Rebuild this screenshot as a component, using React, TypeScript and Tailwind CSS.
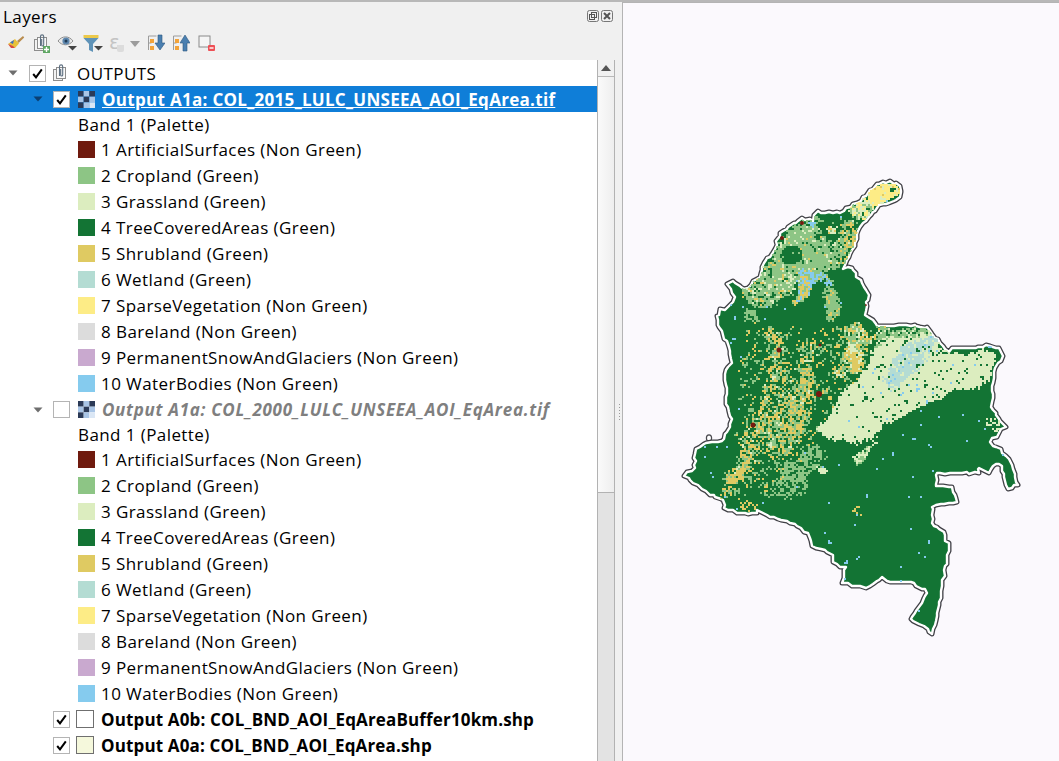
import React, { useMemo } from 'react';

type Pt = [number, number];
type ClassName = 'dark' | 'crop' | 'grass' | 'shrub' | 'wet' | 'sparse' | 'water' | 'red' | 'bare';

const COLORS: Record<ClassName, string> = {
  dark: '#137434',
  crop: '#8dc585',
  grass: '#dcedbf',
  shrub: '#dfca62',
  wet: '#b4dcd3',
  sparse: '#fdec86',
  water: '#85cbee',
  red: '#771a10',
  bare: '#dcdcdc',
};

const legend = [
  { color: '#6f1a0e', label: '1 ArtificialSurfaces (Non Green)' },
  { color: '#8dc585', label: '2 Cropland (Green)' },
  { color: '#dcedbf', label: '3 Grassland (Green)' },
  { color: '#137434', label: '4 TreeCoveredAreas (Green)' },
  { color: '#dfca62', label: '5 Shrubland (Green)' },
  { color: '#b4dcd3', label: '6 Wetland (Green)' },
  { color: '#fdec86', label: '7 SparseVegetation (Non Green)' },
  { color: '#dcdcdc', label: '8 Bareland (Non Green)' },
  { color: '#c9a9cf', label: '9 PermanentSnowAndGlaciers (Non Green)' },
  { color: '#85cbee', label: '10 WaterBodies (Non Green)' },
];

const outlineBase: Pt[] = [
  [870, 190], [876, 185], [883, 182], [891, 182], [897, 184], [902, 193], [897, 200], [880, 206], [876, 210], [870, 218],
  [862, 223], [858, 235], [853, 250], [843, 268], [852, 268], [857, 277], [862, 283], [869, 295], [865, 315], [873, 320],
  [877, 327], [910, 325], [928, 328], [948, 352], [953, 349], [987, 346], [1000, 348], [1002, 357], [995, 367], [992, 383],
  [992, 410], [995, 412], [1005, 427], [990, 442], [1010, 458], [1018, 485], [1008, 488], [1000, 463], [988, 472], [980, 467],
  [978, 473], [937, 473], [936, 487], [952, 488], [957, 502], [932, 506], [932, 523], [943, 532], [949, 548], [933, 633],
  [927, 630], [920, 623], [910, 620], [928, 592], [910, 582], [893, 583], [883, 578], [870, 587], [852, 586], [843, 582],
  [845, 568], [833, 563], [832, 554], [813, 545], [808, 533], [790, 522], [770, 517], [758, 510], [757, 514], [737, 512],
  [725, 508], [723, 500], [703, 490], [685, 475], [695, 468], [695, 450], [707, 443], [722, 442], [733, 420], [727, 408],
  [725, 370], [732, 363], [727, 342], [717, 325], [720, 310], [728, 307], [735, 297], [728, 285], [732, 282], [745, 290],
  [762, 273], [763, 263], [773, 253], [780, 233], [802, 218], [813, 220], [817, 212], [840, 213], [860, 200],
];

const hash = (x: number, y: number) => {
  const s = Math.sin(x * 127.1 + y * 311.7) * 43758.5453;
  return s - Math.floor(s);
};

const smooth = (x: number, y: number) => {
  const ix = Math.floor(x);
  const iy = Math.floor(y);
  const fx = x - ix;
  const fy = y - iy;
  const u = fx * fx * (3 - 2 * fx);
  const v = fy * fy * (3 - 2 * fy);
  const a = hash(ix, iy);
  const b = hash(ix + 1, iy);
  const c = hash(ix, iy + 1);
  const d = hash(ix + 1, iy + 1);
  return a + (b - a) * u + (c - a) * v + (a - b - c + d) * u * v;
};

// the coast and the border are not straight lines
const roughen = (poly: Pt[]): Pt[] => {
  const out: Pt[] = [];
  poly.forEach((a, i) => {
    const b = poly[(i + 1) % poly.length];
    const len = Math.hypot(b[0] - a[0], b[1] - a[1]);
    const steps = Math.max(1, Math.round(len / 4));
    for (let s = 0; s < steps; s++) {
      const t = s / steps;
      const x = a[0] + (b[0] - a[0]) * t;
      const y = a[1] + (b[1] - a[1]) * t;
      out.push([Math.round(x + (hash(x, y) - 0.5) * 2.4), Math.round(y + (hash(y, x) - 0.5) * 2.4)]);
    }
  });
  return out;
};

const outline = roughen(outlineBase);

const disc = (cx: number, cy: number, r: number): Pt[] =>
  Array.from({ length: 10 }, (_, i) => [cx + r * Math.cos((i * Math.PI) / 5), cy + r * Math.sin((i * Math.PI) / 5)] as Pt);

type Region = { poly: Pt[]; mix: Partial<Record<ClassName, number>>; warp?: number };

// later regions win over earlier ones
const regions: Region[] = [
  { poly: [[748, 325], [880, 325], [850, 385], [810, 440], [790, 500], [740, 500], [735, 470]], mix: { dark: 0.8, crop: 0.12, shrub: 0.08 } },
  { poly: [[745, 288], [775, 280], [775, 310], [745, 303]], mix: { crop: 0.55, dark: 0.28, shrub: 0.1, grass: 0.07 }, warp: 4 },
  { poly: [[783, 233], [813, 223], [818, 220], [820, 237], [830, 247], [840, 240], [843, 267], [827, 270], [797, 273], [793, 297], [773, 303], [770, 283], [750, 287], [760, 273], [773, 257], [780, 240]], mix: { crop: 0.82, dark: 0.06, grass: 0.07, shrub: 0.05 } },
  { poly: disc(792, 255, 10), mix: { dark: 0.97, crop: 0.03 }, warp: 2 },
  { poly: [[817, 213], [857, 220], [847, 230], [833, 245], [823, 237], [818, 227]], mix: { dark: 0.96, crop: 0.04 }, warp: 3 },
  { poly: [[828, 226], [838, 228], [834, 236], [826, 232]], mix: { grass: 0.5, shrub: 0.3, crop: 0.2 }, warp: 2 },
  { poly: [[840, 225], [860, 221], [846, 266], [838, 262]], mix: { shrub: 0.3, crop: 0.35, dark: 0.28, grass: 0.07 } },
  { poly: [[770, 283], [797, 277], [794, 300], [772, 306]], mix: { crop: 0.6, grass: 0.2, shrub: 0.12, dark: 0.08 } },
  { poly: [[797, 283], [803, 267], [827, 273], [830, 277], [817, 285], [803, 292]], mix: { water: 0.65, crop: 0.25, shrub: 0.1 }, warp: 4 },
  { poly: [[800, 283], [812, 283], [808, 300], [795, 305]], mix: { shrub: 0.5, crop: 0.3, water: 0.2 }, warp: 4 },
  { poly: [[827, 280], [833, 280], [834, 312], [824, 312]], mix: { water: 0.3, crop: 0.5, dark: 0.2 }, warp: 3 },
  { poly: [[824, 297], [834, 287], [841, 317], [828, 322]], mix: { crop: 0.7, dark: 0.15, shrub: 0.15 }, warp: 4 },
  { poly: [[807, 222], [816, 223], [812, 229]], mix: { water: 1 }, warp: 1 },
  { poly: [[847, 212], [867, 198], [872, 205], [870, 216], [860, 221]], mix: { grass: 0.4, crop: 0.3, sparse: 0.2, dark: 0.1 }, warp: 3 },
  { poly: [[866, 197], [870, 190], [883, 183], [897, 184], [902, 193], [880, 205], [872, 208]], mix: { sparse: 0.82, grass: 0.1, shrub: 0.08 }, warp: 1 },
  { poly: disc(893, 190, 2.5), mix: { dark: 0.9, sparse: 0.1 }, warp: 0 },
  { poly: [[743, 310], [757, 310], [757, 322], [745, 322]], mix: { crop: 0.85, dark: 0.15 }, warp: 3 },
  { poly: [[763, 333], [785, 335], [787, 380], [783, 410], [770, 435], [757, 457], [735, 487], [718, 497], [727, 478], [748, 425], [762, 395], [768, 370]], mix: { shrub: 0.28, crop: 0.3, dark: 0.37, grass: 0.05 } },
  { poly: [[730, 480], [745, 460], [751, 457], [745, 475], [733, 485]], mix: { shrub: 0.8, crop: 0.12, dark: 0.08 }, warp: 3 },
  { poly: [[803, 337], [820, 345], [815, 380], [808, 410], [800, 430], [783, 453], [770, 463], [770, 430], [785, 405], [795, 370]], mix: { shrub: 0.34, crop: 0.34, dark: 0.27, grass: 0.05 } },
  { poly: [[787, 405], [803, 402], [800, 432], [783, 445]], mix: { shrub: 0.5, crop: 0.35, dark: 0.15 }, warp: 5 },
  { poly: [[843, 327], [857, 320], [877, 337], [857, 373], [833, 373], [847, 350]], mix: { grass: 0.2, shrub: 0.35, crop: 0.3, dark: 0.15 }, warp: 5 },
  { poly: [[850, 357], [863, 357], [857, 372], [848, 372]], mix: { shrub: 0.85, grass: 0.15 }, warp: 3 },
  { poly: [[767, 487], [783, 473], [803, 450], [817, 450], [827, 460], [820, 473], [803, 490], [780, 497]], mix: { crop: 0.58, dark: 0.4, water: 0.02 } },
  { poly: [[853, 503], [863, 503], [862, 517], [855, 517]], mix: { shrub: 0.55, dark: 0.45 }, warp: 3 },
  { poly: [[740, 503], [757, 503], [755, 512], [742, 512]], mix: { shrub: 0.35, dark: 0.62, water: 0.03 }, warp: 3 },
  { poly: [[877, 330], [928, 330], [948, 354], [1000, 350], [995, 370], [990, 385], [950, 395], [930, 403], [883, 427], [877, 443], [850, 443], [827, 438], [813, 432], [830, 410], [833, 407], [857, 377], [877, 347]], mix: { grass: 0.93, dark: 0.06, water: 0.01 }, warp: 4 },
  { poly: [[877, 328], [925, 328], [932, 338], [890, 340], [877, 347]], mix: { crop: 0.55, dark: 0.25, grass: 0.2 }, warp: 4 },
  { poly: [[883, 377], [897, 347], [937, 340], [917, 370], [890, 393]], mix: { wet: 0.8, grass: 0.12, water: 0.05, dark: 0.03 }, warp: 5 },
  { poly: [[817, 467], [830, 472], [823, 477]], mix: { grass: 0.85, dark: 0.15 }, warp: 2 },
  { poly: [[852, 457], [877, 443], [860, 467]], mix: { grass: 0.5, dark: 0.2, crop: 0.3 }, warp: 2 },
  { poly: [[985, 415], [1000, 420], [998, 432], [986, 428]], mix: { dark: 0.75, grass: 0.25 }, warp: 2 },
];

const blots: [number, number, number][] = [
  [782, 238, 2], [819, 394, 3], [779, 350, 2.5], [802, 223, 2], [753, 425, 2.5], [820, 345, 1.5], [866, 305, 1],
];

const inside = (p: Pt, poly: Pt[]) => {
  let hit = false;
  for (let i = 0, j = poly.length - 1; i < poly.length; j = i++) {
    const [xi, yi] = poly[i];
    const [xj, yj] = poly[j];
    if (yi > p[1] !== yj > p[1] && p[0] < ((xj - xi) * (p[1] - yi)) / (yj - yi) + xi) hit = !hit;
  }
  return hit;
};

const buildRaster = () => {
  const paths: Partial<Record<ClassName, string>> = {};
  for (let y = 178; y < 640; y += 2) {
    for (let x = 680; x < 1022; x += 2) {
      const p: Pt = [x + 1, y + 1];
      if (!inside(p, outline)) continue;
      const nx = smooth(x / 14, y / 14) - 0.5 + (hash(x, y + 3) - 0.5) * 0.4;
      const ny = smooth(x / 14 + 40, y / 14 + 40) - 0.5 + (hash(x + 3, y) - 0.5) * 0.4;
      let mix: Region['mix'] = { dark: 0.994, water: 0.006 };
      for (const r of regions) {
        const w = (r.warp ?? 8) * 2;
        if (inside([p[0] + nx * w, p[1] + ny * w], r.poly)) mix = r.mix;
      }
      const t = hash(x, y) > 0.65 ? hash(Math.floor(x / 4) + 0.3, Math.floor(y / 4) + 0.7) : hash(x + 0.5, y + 0.5);
      let sum = 0;
      let pick: ClassName = 'dark';
      for (const k of Object.keys(mix) as ClassName[]) {
        sum += mix[k] as number;
        if (t <= sum) {
          pick = k;
          break;
        }
      }
      if (pick !== 'dark') paths[pick] = (paths[pick] || '') + `M${x} ${y}h2v2h-2z`;
    }
  }
  return paths;
};

const ColombiaMap = () => {
  const raster = useMemo(buildRaster, []);
  const pts = outline.map((p) => p.join(',')).join(' ');
  return (
    <svg className="block h-full w-full" viewBox="623 3 436 758">
      <defs>
        <clipPath id="col">
          <polygon points={pts} />
        </clipPath>
      </defs>
      <ellipse cx="709" cy="438" rx="2.600" ry="3.200" fill="#fff" stroke="#4a4a4f" strokeWidth="1.200" />
      <polygon points={pts} fill="none" stroke="#404046" strokeWidth="5" strokeLinejoin="round" />
      <polygon points={pts} fill="#137434" stroke="#fff" strokeWidth="2.400" strokeLinejoin="round" />
      <g clipPath="url(#col)">
        {(Object.keys(raster) as ClassName[]).map((k) => (
          <path key={k} d={raster[k]} fill={COLORS[k]} />
        ))}
        {blots.map(([x, y, r]) => (
          <circle key={`${x}-${y}`} cx={x} cy={y} r={r} fill={COLORS.red} />
        ))}
      </g>
    </svg>
  );
};

const Arrow = ({ dark }: { dark?: boolean }) => (
  <svg width="10" height="6" viewBox="0 0 10 6" className="block">
    <polygon points="0.5,0.5 9.5,0.5 5,5.5" fill={dark ? '#0b3f73' : '#6e6e6e'} />
  </svg>
);

const Check = ({ checked = true }: { checked?: boolean }) => (
  <span className="flex h-[17px] w-[17px] shrink-0 items-center justify-center border border-[#b4b4b4] bg-white">
    {checked && (
      <svg width="13" height="13" viewBox="0 0 13 13">
        <path d="M2.2 7 L5 10.4 L10.8 2.4" fill="none" stroke="#000" strokeWidth="2" />
      </svg>
    )}
  </span>
);

const RasterIcon = () => (
  <svg width="17" height="17" viewBox="0 0 18 18" className="block shrink-0">
    <rect x="0" y="0" width="6" height="6" fill="#2b3a57" />
    <rect x="6" y="0" width="6" height="6" fill="#a9c5e6" />
    <rect x="12" y="0" width="6" height="6" fill="#2b3a57" />
    <rect x="0" y="6" width="6" height="6" fill="#a9c5e6" />
    <rect x="6" y="6" width="6" height="6" fill="#2b3a57" />
    <rect x="12" y="6" width="6" height="6" fill="#a9c5e6" />
    <rect x="0" y="12" width="6" height="6" fill="#2b3a57" />
    <rect x="6" y="12" width="6" height="6" fill="#a9c5e6" />
    <rect x="12" y="12" width="6" height="6" fill="#dbe7f5" />
  </svg>
);

const GroupIcon = ({ plus }: { plus?: boolean }) => (
  <svg width="18" height="20" viewBox="0 0 18 20" className="block shrink-0">
    <rect x="1.5" y="6.5" width="9" height="11" fill="#f2f2f2" stroke="#8d8d8d" />
    <rect x="4.5" y="4.5" width="9" height="11" fill="#fafafa" stroke="#8d8d8d" />
    <path d="M7.5 13V3.5a1.6 1.6 0 0 1 3.2 0V12a1 1 0 0 1-2 0V6" fill="none" stroke="#5d6f80" strokeWidth="1.1" />
    {plus && (
      <g>
        <rect x="10" y="13" width="7" height="7" fill="#5fa763" />
        <path d="M13.5 14v5M11 16.5h5" stroke="#fff" strokeWidth="1.4" />
      </g>
    )}
  </svg>
);

const Toolbar = () => (
  <div className="flex h-[30px] shrink-0 items-center pb-[4px] pl-[7px]">
    {/* clear / style */}
    <svg width="18" height="16" viewBox="0 0 18 16" className="block">
      <path d="M10 6 L16 1 L17.2 2.4 L11.6 8 Z" fill="#b98c4e" />
      <polygon points="1,9 8,4 12,8.5 8,13" fill="#e8c13a" />
      <polygon points="1,9 6,11 8,13 4,13" fill="#d8483f" />
      <polygon points="3,7.6 7,5 6,9" fill="#3f6fc0" />
    </svg>
    <div className="ml-[8px]">
      <GroupIcon plus />
    </div>
    {/* eye */}
    <svg width="20" height="16" viewBox="0 0 20 16" className="ml-[6px] block">
      <path d="M1 6 C5 0.5 12 0.5 16 6 C12 11 5 11 1 6Z" fill="#e8e8e8" stroke="#8f8f8f" />
      <circle cx="9" cy="6" r="3.6" fill="#5d86ad" />
      <circle cx="9" cy="6" r="1.5" fill="#1f3a55" />
      <polygon points="11,11 20,11 15.5,15.5" fill="#444" />
    </svg>
    {/* filter */}
    <svg width="20" height="19" viewBox="0 0 20 19" className="ml-[6px] block">
      <polygon points="0.5,1 15.5,1 15.5,4 0.5,4" fill="#ecc94a" />
      <polygon points="0.5,4 15.5,4 10,10 10,18 6,16 6,10" fill="#5f93b8" />
      <polygon points="11,12 20,12 15.5,16.5" fill="#444" />
    </svg>
    {/* expression, disabled */}
    <span className="relative ml-[6px] flex h-[22px] w-[18px] items-start font-['DejaVu_Sans'] text-[20px] leading-[20px] tracking-normal text-[#c4c4c4]">
      ε
      <span className="absolute bottom-[2px] left-[8px] h-[7px] w-[7px] rounded-b-[2px] bg-[#dcdcdc]" />
    </span>
    <div className="ml-[3px] mt-[2px]">
      <svg width="10" height="6" viewBox="0 0 10 6" className="block">
        <polygon points="0,0 10,0 5,6" fill="#9c9c9c" />
      </svg>
    </div>
    {/* expand all */}
    <svg width="18" height="18" viewBox="0 0 18 18" className="ml-[7px] block">
      <path d="M1.500 2h8M1.500 2v14M1.500 9h3" stroke="#9c9c9c" fill="none" />
      <rect x="3" y="5" width="4" height="4" fill="#f2a33a" />
      <rect x="3" y="12" width="4" height="4" fill="#f2a33a" />
      <polygon points="11,1 15,1 15,9 18,9 13,16 8,9 11,9" fill="#4a7fb0" stroke="#2e587f" strokeWidth="0.6" />
    </svg>
    {/* collapse all */}
    <svg width="18" height="18" viewBox="0 0 18 18" className="ml-[7px] block">
      <path d="M1.500 2h8M1.500 2v14M1.500 9h3" stroke="#9c9c9c" fill="none" />
      <rect x="3" y="5" width="4" height="4" fill="#f2a33a" />
      <rect x="3" y="12" width="4" height="4" fill="#f2a33a" />
      <polygon points="11,17 15,17 15,9 18,9 13,1 8,9 11,9" fill="#4a7fb0" stroke="#2e587f" strokeWidth="0.6" />
    </svg>
    {/* remove */}
    <svg width="18" height="17" viewBox="0 0 18 17" className="ml-[8px] block">
      <rect x="1" y="1" width="11" height="11" fill="#f5f5f5" stroke="#8a8a8a" />
      <rect x="10" y="10" width="7" height="6" rx="1" fill="#ee4f55" />
      <path d="M11.500 13h4" stroke="#fff" strokeWidth="1.400" />
    </svg>
  </div>
);

const LegendRow = ({ color, label }: { color: string; label: string }) => (
  <div className="flex h-[26px] items-center pl-[78px]">
    <span className="h-[17px] w-[17px] shrink-0" style={{ backgroundColor: color }} />
    <span className="ml-[6px] whitespace-nowrap">{label}</span>
  </div>
);

const RasterBlock = ({ name, on }: { name: string; on: boolean }) => (
  <>
    <div className={`flex h-[26px] items-center pl-[33px] ${on ? 'bg-[#0f7ed8]' : 'pt-[1px]'}`}>
      <span className="flex w-[20px] shrink-0 items-center">
        <Arrow dark={on} />
      </span>
      <Check checked={on} />
      <span className="ml-[8px]">
        <RasterIcon />
      </span>
      <span
        className={`ml-[7px] whitespace-nowrap font-bold ${on ? 'tracking-[0.3px] text-white underline' : 'tracking-[0.7px] italic text-[#7f7f7f]'}`}
      >
        {name}
      </span>
    </div>
    <div className="flex h-[24px] items-center pl-[78px] pt-[1px]">Band 1 (Palette)</div>
    {legend.map((l) => (
      <LegendRow key={l.label} color={l.color} label={l.label} />
    ))}
  </>
);

const VectorRow = ({ color, name }: { color: string; name: string }) => (
  <div className="flex h-[26px] items-center pl-[53px]">
    <Check />
    <span className="ml-[6px] h-[18px] w-[18px] shrink-0 border border-[#6f6f6f]" style={{ backgroundColor: color }} />
    <span className="ml-[7px] whitespace-nowrap font-bold tracking-[0.15px]">{name}</span>
  </div>
);

const Scrollbar = () => (
  <div className="flex w-[18px] shrink-0 flex-col border-x border-[#b2b2b2] bg-[#e3e3e3]">
    <div className="flex h-[17px] shrink-0 items-center justify-center border-b border-[#b8b8b8] bg-[#f1f1f1]">
      <svg width="10" height="6" viewBox="0 0 10 6" className="block">
        <polygon points="0,6 10,6 5,0" fill="#555" />
      </svg>
    </div>
    <div className="h-[416px] shrink-0 border-b border-[#b2b2b2] bg-gradient-to-r from-[#fafafa] to-[#eeeeee]" />
  </div>
);

export default function App() {
  return (
    <div
      className="flex h-[761px] w-[1059px] overflow-hidden border-t-2 border-[#b8b8b8] bg-[#f0f0f0] text-[17px] leading-none tracking-[0.42px] text-black"
      style={{ fontFamily: "'Open Sans', 'Noto Sans', sans-serif" }}
    >
      <div className="flex w-[622px] shrink-0 flex-col">
        <div className="flex h-[28px] shrink-0 items-center justify-between pl-[3px] pr-[9px]">
          <span>Layers</span>
          <span className="flex items-center gap-[2px]">
            <svg width="12" height="12" viewBox="0 0 12 12" className="block">
              <rect x="0.500" y="0.500" width="11" height="11" rx="2" fill="none" stroke="#777" />
              <rect x="2.500" y="4.500" width="5" height="5" fill="none" stroke="#555" />
              <rect x="4.500" y="2.500" width="5" height="5" fill="none" stroke="#555" />
            </svg>
            <svg width="12" height="12" viewBox="0 0 12 12" className="block">
              <rect x="0.500" y="0.500" width="11" height="11" rx="2" fill="none" stroke="#777" />
              <path d="M3 3l6 6M9 3l-6 6" stroke="#555" strokeWidth="2" />
            </svg>
          </span>
        </div>
        <Toolbar />
        <div className="flex min-h-0 flex-1 pr-[7px]">
          <div className="min-w-0 flex-1 overflow-hidden bg-white">
            <div className="flex h-[26px] items-center pl-[8px]">
              <span className="flex w-[21px] shrink-0 items-center">
                <Arrow />
              </span>
              <Check />
              <span className="ml-[6px]">
                <GroupIcon />
              </span>
              <span className="ml-[7px]">OUTPUTS</span>
            </div>
            <RasterBlock name="Output A1a: COL_2015_LULC_UNSEEA_AOI_EqArea.tif" on />
            <RasterBlock name="Output A1a: COL_2000_LULC_UNSEEA_AOI_EqArea.tif" on={false} />
            <VectorRow color="#ffffff" name="Output A0b: COL_BND_AOI_EqAreaBuffer10km.shp" />
            <VectorRow color="#f5f8dc" name="Output A0a: COL_BND_AOI_EqArea.shp" />
          </div>
          <Scrollbar />
        </div>
      </div>
      <div className="min-w-0 flex-1 border-l border-t border-[#b4b4b4] bg-[#fbf9fd]">
        <ColombiaMap />
      </div>
      {/* splitter grip */}
      <div className="absolute left-[619px] top-[404px] flex flex-col gap-[2px]">
        {[0, 1, 2, 3, 4, 5].map((i) => (
          <span key={i} className="h-px w-px bg-[#9a9a9a]" />
        ))}
      </div>
    </div>
  );
}
